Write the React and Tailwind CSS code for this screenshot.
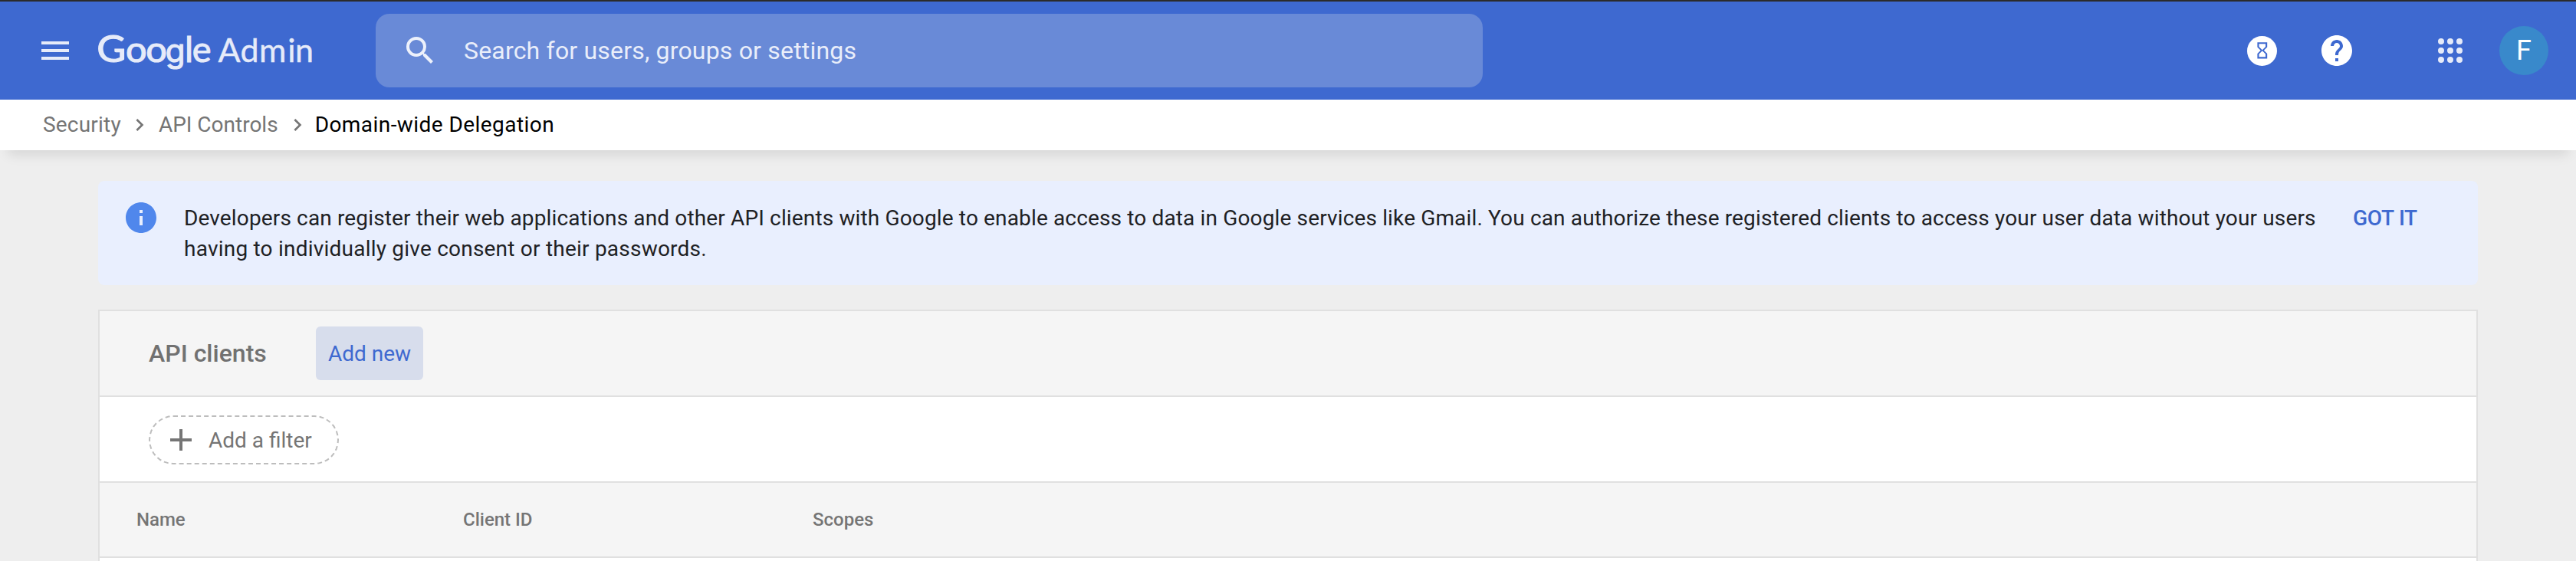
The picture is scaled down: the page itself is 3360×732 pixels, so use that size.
const Icon = ({ d, className }) => (
  <svg viewBox="0 0 24 24" className={className} fill="currentColor" aria-hidden="true">
    <path d={d} />
  </svg>
);

const paths = {
  menu: "M3 18h18v-2H3v2zm0-5h18v-2H3v2zm0-7v2h18V6H3z",
  search:
    "M15.5 14h-.79l-.28-.27A6.471 6.471 0 0 0 16 9.5 6.5 6.5 0 1 0 9.5 16c1.61 0 3.09-.59 4.23-1.57l.27.28v.79l5 4.99L20.49 19l-4.99-5zm-6 0C7.01 14 5 11.99 5 9.5S7.01 5 9.5 5 14 7.01 14 9.5 11.99 14 9.5 14z",
  hourglass:
    "M6 2v6h.01L6 8.01 10 12l-4 4 .01.01H6V22h12v-5.99h-.01L18 16l-4-4 4-3.99-.01-.01H18V2H6zm10 14.5V20H8v-3.5l4-4 4 4zm-4-5l-4-4V4h8v3.5l-4 4z",
  help: "M12 2C6.48 2 2 6.48 2 12s4.48 10 10 10 10-4.48 10-10S17.52 2 12 2zm1 17h-2v-2h2v2zm2.07-7.75l-.9.92C13.45 12.9 13 13.5 13 15h-2v-.5c0-1.1.45-2.1 1.17-2.83l1.24-1.26c.37-.36.59-.86.59-1.41 0-1.1-.9-2-2-2s-2 .9-2 2H8c0-2.21 1.79-4 4-4s4 1.79 4 4c0 .88-.36 1.68-.93 2.25z",
  apps: "M6 8a2 2 0 1 0 0-4 2 2 0 0 0 0 4zm6 0a2 2 0 1 0 0-4 2 2 0 0 0 0 4zm6 0a2 2 0 1 0 0-4 2 2 0 0 0 0 4zM6 14a2 2 0 1 0 0-4 2 2 0 0 0 0 4zm6 0a2 2 0 1 0 0-4 2 2 0 0 0 0 4zm6 0a2 2 0 1 0 0-4 2 2 0 0 0 0 4zM6 20a2 2 0 1 0 0-4 2 2 0 0 0 0 4zm6 0a2 2 0 1 0 0-4 2 2 0 0 0 0 4zm6 0a2 2 0 1 0 0-4 2 2 0 0 0 0 4z",
  chevron: "M10 6L8.59 7.41 13.17 12l-4.58 4.59L10 18l6-6z",
  info: "M12 2C6.48 2 2 6.48 2 12s4.48 10 10 10 10-4.48 10-10S17.52 2 12 2zm1 15h-2v-6h2v6zm0-8h-2V7h2v2z",
  plus: "M19 13h-6v6h-2v-6H5v-2h6V5h2v6h6v2z",
};

function Logo() {
  return (
    <svg className="ml-6 h-16 w-[300px] shrink-0" viewBox="0 0 300 64" fill="#e6ebf9" stroke="#e6ebf9">
      <g className="font-[Lato,sans-serif]">
        <text fontSize="47.5" strokeWidth="1.1" transform="translate(6.2 47) scale(1.1 1)">
          G
        </text>
        <text fontSize="45.5" strokeWidth="1.1" transform="translate(44 47) scale(1.07 1)" x="0 24.6">
          oo
        </text>
        <text y="47" fontSize="42" strokeWidth="1.1" x="95.8" className="font-[Inter,sans-serif]">
          g
        </text>
        <text y="47" fontSize="47" strokeWidth="1" x="120.9 130.8">
          le
        </text>
        <text y="47" fontSize="43" strokeWidth="0.4" x="164.4 193.5 218 255.2 265">
          Admin
        </text>
      </g>
    </svg>
  );
}

function Header() {
  return (
    <header className="flex h-[130px] items-center border-t-2 border-[#2b2b2b] bg-[#3e69d0] pr-9 pl-12">
      <Icon d={paths.menu} className="size-12 shrink-0 text-[#e6ebf9]" />
      <Logo />
      <div className="ml-[70px] flex h-24 w-[1444px] items-center rounded-[18px] bg-[#698ad7] pl-[34px]">
        <Icon d={paths.search} className="size-12 text-[#edf1fb]" />
        <span className="ml-[33px] text-[32px] leading-[38px] tracking-[0.19px] text-[#e9eefa]">
          Search for users, groups or settings
        </span>
      </div>
      <div className="ml-auto flex items-center">
        <span className="flex size-[39px] items-center justify-center rounded-full bg-white text-[#3e69d0]">
          <Icon d={paths.hourglass} className="size-[25.6px]" />
        </span>
        <Icon d={paths.help} className="ml-[54px] size-12 text-white" />
        <Icon d={paths.apps} className="ml-[100px] size-12 text-[#e6ebf9]" />
        <span className="ml-10 flex size-16 items-center justify-center rounded-full bg-[#3989cb] text-[36px] leading-none text-white">
          F
        </span>
      </div>
    </header>
  );
}

function Breadcrumbs() {
  return (
    <nav className="relative z-10 flex h-[66px] items-center bg-white pl-14 text-[28px] leading-8 text-[#757575] shadow-[0_16px_16px_-10px_rgba(0,0,0,0.10)]">
      <span className="tracking-[0.2px]">Security</span>
      <Icon d={paths.chevron} className="ml-2 size-8" />
      <span className="ml-[9px]">API Controls</span>
      <Icon d={paths.chevron} className="ml-[9px] size-8" />
      <span className="ml-[7px] tracking-[0.44px] text-black">Domain-wide Delegation</span>
    </nav>
  );
}

function Banner() {
  return (
    <section className="flex h-[136px] items-start rounded-lg bg-[#e9effe] pt-6 pl-8 text-[28px] leading-10 text-[#202124]">
      <Icon d={paths.info} className="size-12 shrink-0 text-[#5087ec]" />
      <p className="ml-8 w-[2797px] pt-[5px] whitespace-nowrap">
        <span className="tracking-[0.145px]">
          Developers can register their web applications and other API clients with Google to enable access to data in
          Google services like Gmail. You can authorize these registered clients to access your user data without your
          users
        </span>
        <br />
        <span className="tracking-[0.22px]">having to individually give consent or their passwords.</span>
      </p>
      <button className="ml-8 pt-[5px] font-medium tracking-[-0.3px] whitespace-nowrap text-[#3e69d0]">GOT IT</button>
    </section>
  );
}

function Clients() {
  return (
    <section className="mt-8 border-2 border-b-0 border-[#e0e0e0] bg-white text-[#757575]">
      <div className="flex h-[112px] items-center border-b-2 border-[#e0e0e0] bg-[#f5f5f5] pl-16">
        <h2 className="w-[218px] text-[32px] leading-10 font-medium text-[#717171]">API clients</h2>
        <button className="h-[70px] w-[140px] rounded-md bg-[#d7ddec] pt-0.5 text-[28px] leading-8 text-[#3e69d0]">
          Add new
        </button>
      </div>
      <div className="flex h-[112px] items-center border-b-2 border-[#e0e0e0] bg-white pt-0.5 pl-16">
        <button className="flex h-16 w-[248px] items-center rounded-full border-2 border-dashed border-[#bdbdbd] pl-4 text-[28px] leading-8">
          <Icon d={paths.plus} className="size-12" />
          <span className="ml-3 pt-0.5">Add a filter</span>
        </button>
      </div>
      <div className="flex h-[98px] items-center border-b-2 border-[#e0e0e0] bg-[#f5f5f5] pl-12 text-[24px] leading-8 font-medium">
        <span className="w-[426px]">Name</span>
        <span className="w-[456px]">Client ID</span>
        <span>Scopes</span>
      </div>
      <div className="h-1 bg-white" />
    </section>
  );
}

export default function App() {
  return (
    <div className="h-[732px] w-[3360px] overflow-hidden bg-[#eeeeee] font-[Roboto,sans-serif]">
      <Header />
      <Breadcrumbs />
      <main className="px-32 pt-10">
        <Banner />
        <Clients />
      </main>
    </div>
  );
}
